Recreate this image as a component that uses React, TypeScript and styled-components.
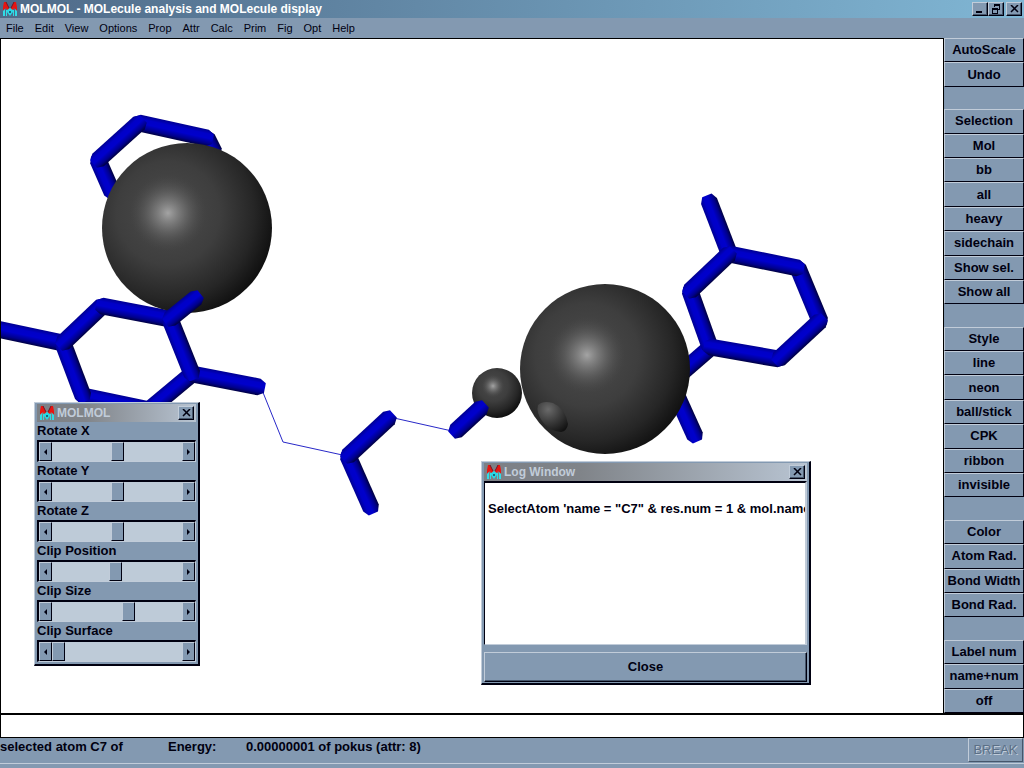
import React, { useState } from "react";
import styled, { createGlobalStyle, css } from "styled-components";

const color = {
  face: "#8399b1",
  light: "#c1ccd9",
  dark: "#46566b",
  ink: "#000010",
};

const GlobalStyle = createGlobalStyle`
  *, *::before, *::after { box-sizing: border-box; }
  body { margin: 0; background: ${color.face}; }
  button, input, textarea { font: inherit; color: inherit; margin: 0; }
`;

const raised = css`
  border: 1px solid;
  border-color: ${color.light} ${color.ink} ${color.ink} ${color.light};
  background: ${color.face};
`;

const Page = styled.div`
  display: flex;
  flex-direction: column;
  height: 100vh;
  overflow: hidden;
  background: ${color.face};
  color: ${color.ink};
  font: bold 13px/16px "Liberation Sans", Arial, sans-serif;
`;

const TitleBar = styled.header<{ $inactive?: boolean }>`
  display: flex;
  align-items: center;
  flex: none;
  height: 18px;
  padding: 0 2px;
  gap: 2px;
  font-size: 12px;
  color: ${(p) => (p.$inactive ? color.light : "#fff")};
  background: ${(p) =>
    p.$inactive
      ? "linear-gradient(90deg, #7c8086, #808489 30%, #b8c4d2)"
      : "linear-gradient(90deg, #4f6a88, #80b6d4)"};
`;

const Title = styled.h1`
  flex: 1;
  margin: 0;
  font-size: 12px;
  line-height: 16px;
  white-space: nowrap;
`;

const CaptionButton = styled.button<{ $apart?: boolean }>`
  ${raised}
  display: grid;
  place-items: center;
  width: 16px;
  height: 14px;
  padding: 0;
  margin-left: ${(p) => (p.$apart ? "2px" : "0")};
  color: ${color.ink};
  box-shadow: inset -1px -1px ${color.dark};
`;

const CaptionButtons = styled.div`
  display: flex;
`;

const MenuBar = styled.nav`
  display: flex;
  flex: none;
  align-items: center;
  height: 20px;
  padding: 0 6px;
  gap: 11px;
  font-size: 11px;
  font-weight: normal;
`;

const MenuItem = styled.button`
  border: 0;
  padding: 0;
  background: none;
`;

const Workspace = styled.div`
  display: flex;
  flex: 1;
  min-height: 0;
`;

const Canvas = styled.main`
  position: relative;
  display: flex;
  flex: 1;
  min-width: 0;
  overflow: hidden;
  background: #fff;
  border: solid #000;
  border-width: 1px 1px 0 1px;
`;

const Scene = styled.svg`
  display: block;
  width: 100%;
`;

const Sidebar = styled.aside`
  display: flex;
  flex-direction: column;
  flex: none;
  width: 80px;
`;

const SideButton = styled.button`
  ${raised}
  flex: 1 1 0;
  min-height: 0;
  padding: 0;
  white-space: nowrap;
`;

const SideGap = styled.div`
  flex: 1 1 0;
`;

const CommandLine = styled.input`
  flex: none;
  width: 100%;
  height: 25px;
  padding: 0 4px;
  border: solid #000;
  border-width: 2px 1px 1px 1px;
  border-radius: 0;
  background: #fff;
  outline: none;
`;

const StatusBar = styled.footer`
  display: flex;
  flex: none;
  align-items: flex-start;
  height: 30px;
  padding-right: 1px;
  line-height: 18px;
  background: linear-gradient(${color.light}, ${color.light}) 0 25px / 100% 1px no-repeat;
`;

const StatusText = styled.span<{ $width?: number }>`
  flex: ${(p) => (p.$width ? `0 0 ${p.$width}px` : "1")};
  white-space: nowrap;
`;

const BreakButton = styled.button`
  ${raised}
  border-color: ${color.light} ${color.dark} ${color.dark} ${color.light};
  width: 55px;
  height: 24px;
  padding: 0;
  font-size: 13px;
  font-weight: normal;
  color: #5b6f86;
  text-shadow: 1px 1px ${color.light};
`;

const Window = styled.section<{ $left: number; $top: number; $width: number }>`
  position: absolute;
  left: ${(p) => p.$left}px;
  top: ${(p) => p.$top}px;
  width: ${(p) => p.$width}px;
  padding: 1px 2px;
  ${raised}
  border-width: 1px 2px 2px 1px;
`;

const SliderGroup = styled.div`
  padding-bottom: 1px;
`;

const SliderLabel = styled.label`
  display: block;
  line-height: 18px;
`;

const SliderRow = styled.div`
  display: flex;
  width: 159px;
  height: 22px;
  border: solid;
  border-width: 2px 1px 1px 2px;
  border-color: ${color.ink} ${color.light} ${color.light} ${color.ink};
`;

const ArrowButton = styled.button`
  ${raised}
  display: grid;
  place-items: center;
  flex: none;
  width: 13px;
  padding: 0;
`;

const Range = styled.input`
  appearance: none;
  flex: 1;
  min-width: 0;
  height: 100%;
  background: #becbd8;
  outline: none;
  &::-webkit-slider-thumb {
    appearance: none;
    width: 13px;
    height: 19px;
    border: 1px solid;
    border-color: ${color.light} ${color.ink} ${color.ink} ${color.light};
    background: ${color.face};
  }
`;

const LogText = styled.textarea`
  display: block;
  width: 100%;
  height: 164px;
  padding: 2px 3px 0;
  border: solid;
  border-width: 2px 2px 1px 1px;
  border-color: ${color.ink} ${color.light} ${color.light} ${color.ink};
  border-radius: 0;
  background: #fff;
  outline: none;
  resize: none;
  overflow: hidden;
  white-space: pre;
`;

const CloseButton = styled.button`
  ${raised}
  display: block;
  width: 100%;
  height: 30px;
  margin-top: 7px;
  box-shadow: inset -1px -1px ${color.dark};
`;

const Logo = () => (
  <svg width="16" height="16" viewBox="0 0 16 16" aria-hidden="true">
    <path d="M2 1h2l3 6v2H5L4 7 1 10V6zM14 1h-2l-3 6v2h2l1-2 3 3V6z" fill="#e81410" />
    <path d="M4 1l3 6M12 1l-3 6" stroke="#701828" />
    <path d="M1 10l2-2v7H1zM15 10l-2-2v7h2zM4 9h1v6H4zM11 9h1v6h-1z" fill="#30dce6" />
    <path d="M5 9l3-2 3 2v2l-3 4-3-4z" fill="#28d8e4" />
    <path d="M7 10h2v2H7z" fill="#186880" />
  </svg>
);

const CloseGlyph = () => (
  <svg width="9" height="8" viewBox="0 0 9 8" aria-hidden="true">
    <path d="M1 0l7 7M8 0l-7 7" stroke="currentColor" strokeWidth="1.5" />
  </svg>
);

const Arrow = ({ right }: { right?: boolean }) => (
  <svg width="5" height="6" viewBox="0 0 5 6" aria-hidden="true">
    <path d={right ? "M1 0l3 3-3 3z" : "M4 0L1 3l3 3z"} fill="currentColor" />
  </svg>
);

type BondLine = [number, number, number, number];

// A shaded stick, lit from the upper left, with tapered ends.
function Bond({ line, id }: { line: BondLine; id: string }) {
  const [x1, y1, x2, y2] = line;
  const len = Math.hypot(x2 - x1, y2 - y1);
  const ux = (x2 - x1) / len;
  const uy = (y2 - y1) / len;
  let nx = -uy;
  let ny = ux;
  if (nx * 0.6 + ny * 0.8 < 0) {
    nx = -nx;
    ny = -ny;
  }
  const at = (x: number, y: number, along: number, across: number) =>
    `${x + ux * along + nx * across},${y + uy * along + ny * across}`;
  const points = [
    at(x1, y1, 0, -8.5),
    at(x1, y1, -6, -5),
    at(x1, y1, -6, 5),
    at(x1, y1, 0, 8.5),
    at(x2, y2, 0, 8.5),
    at(x2, y2, 6, 5),
    at(x2, y2, 6, -5),
    at(x2, y2, 0, -8.5),
  ].join(" ");
  return (
    <>
      <linearGradient
        id={id}
        gradientUnits="userSpaceOnUse"
        x1={x1 - nx * 8.5}
        y1={y1 - ny * 8.5}
        x2={x1 + nx * 8.5}
        y2={y1 + ny * 8.5}
      >
        <stop offset="0" stopColor="#000090" />
        <stop offset="0.25" stopColor="#0000c8" />
        <stop offset="0.5" stopColor="#0000cc" />
        <stop offset="0.8" stopColor="#00008c" />
        <stop offset="1" stopColor="#000040" />
      </linearGradient>
      <polygon points={points} fill={`url(#${id})`} />
    </>
  );
}

function Sphere({ cx, cy, r, hx, hy, id }: Record<"cx" | "cy" | "r" | "hx" | "hy", number> & { id: string }) {
  return (
    <>
      <radialGradient id={`${id}-body`} gradientUnits="userSpaceOnUse" cx={hx} cy={hy} r={r * 1.35}>
        <stop offset="0" stopColor="#4c4c4c" />
        <stop offset="0.45" stopColor="#3e3e3e" />
        <stop offset="0.75" stopColor="#262626" />
        <stop offset="1" stopColor="#0a0a0a" />
      </radialGradient>
      <radialGradient id={`${id}-shine`} gradientUnits="userSpaceOnUse" cx={hx} cy={hy} r={r * 0.45}>
        <stop offset="0" stopColor="#a4a4a4" />
        <stop offset="0.4" stopColor="#848484" stopOpacity="0.6" />
        <stop offset="1" stopColor="#4c4c4c" stopOpacity="0" />
      </radialGradient>
      <circle cx={cx} cy={cy} r={r} fill={`url(#${id}-body)`} />
      <circle cx={cx} cy={cy} r={r} fill={`url(#${id}-shine)`} />
    </>
  );
}

const backBonds: BondLine[] = [
  [112, 192, 98, 160],
  [207, 138, 214, 152],
  [139, 123, 207, 138],
  [98, 160, 139, 123],
  [-8, 328, 63, 343],
  [83, 396, 150, 410],
  [63, 343, 83, 396],
  [63, 343, 102, 306],
  [102, 306, 170, 319],
  [192, 374, 150, 409],
  [192, 374, 259, 387],
  [348, 456, 371, 508],
  [348, 456, 389, 418],
  [672, 385, 695, 436],
  [680, 374, 710, 348],
  [709, 201, 729, 253],
  [798, 268, 820, 321],
  [729, 254, 798, 268],
  [690, 291, 710, 347],
  [690, 291, 729, 254],
  [710, 347, 779, 359],
  [779, 359, 820, 321],
];

const frontBonds: BondLine[] = [
  [170, 319, 192, 374],
  [170, 319, 196, 298],
  [456, 431, 481, 408],
];

const Molecule = () => (
  <Scene viewBox="1 39 942 674" preserveAspectRatio="xMinYMin slice" role="img" aria-label="Molecule">
    <path d="M262 390l21 52 64 14M394 418l58 13" fill="none" stroke="#2828c8" />
    {backBonds.map((b, i) => (
      <Bond key={i} line={b} id={`back-${i}`} />
    ))}
    <Sphere id="s1" cx={187} cy={228} r={85} hx={168} hy={213} />
    <Sphere id="s2" cx={605} cy={369} r={85} hx={587} hy={355} />
    <Sphere id="s3" cx={497} cy={393} r={25} hx={493} hy={386} />
    <radialGradient id="bump" cx="0.35" cy="0.25" r="0.85">
      <stop offset="0" stopColor="#6a6a6a" />
      <stop offset="0.5" stopColor="#3c3c3c" />
      <stop offset="1" stopColor="#121212" />
    </radialGradient>
    <path d="M538 405q5-5 15-2 12 5 15 21-1 7-7 8-12-1-19-11-6-9-4-16z" fill="url(#bump)" />
    {frontBonds.map((b, i) => (
      <Bond key={i} line={b} id={`front-${i}`} />
    ))}
  </Scene>
);

const menus = ["File", "Edit", "View", "Options", "Prop", "Attr", "Calc", "Prim", "Fig", "Opt", "Help"];

const sideGroups = [
  ["AutoScale", "Undo"],
  ["Selection", "Mol", "bb", "all", "heavy", "sidechain", "Show sel.", "Show all"],
  ["Style", "line", "neon", "ball/stick", "CPK", "ribbon", "invisible"],
  ["Color", "Atom Rad.", "Bond Width", "Bond Rad."],
  ["Label num", "name+num", "off"],
];

const sliders = [
  { name: "Rotate X", start: 50 },
  { name: "Rotate Y", start: 50 },
  { name: "Rotate Z", start: 50 },
  { name: "Clip Position", start: 49 },
  { name: "Clip Size", start: 60 },
  { name: "Clip Surface", start: 0 },
];

function Slider({ name, start }: { name: string; start: number }) {
  const [value, setValue] = useState(start);
  const id = name.toLowerCase().replace(" ", "-");
  const step = (by: number) => setValue((v) => Math.max(0, Math.min(100, v + by)));
  return (
    <>
      <SliderLabel htmlFor={id}>{name}</SliderLabel>
      <SliderRow>
        <ArrowButton aria-label={`Decrease ${name}`} onClick={() => step(-1)}>
          <Arrow />
        </ArrowButton>
        <Range id={id} type="range" min={0} max={100} value={value} onChange={(e) => setValue(+e.target.value)} />
        <ArrowButton aria-label={`Increase ${name}`} onClick={() => step(1)}>
          <Arrow right />
        </ArrowButton>
      </SliderRow>
    </>
  );
}

export default function App() {
  return (
    <Page>
      <GlobalStyle />
      <TitleBar>
        <Logo />
        <Title>MOLMOL - MOLecule analysis and MOLecule display</Title>
        <CaptionButtons>
          <CaptionButton aria-label="Minimize">
            <svg width="10" height="8" viewBox="0 0 10 8">
              <path d="M1 6h6v2H1z" fill="currentColor" />
            </svg>
          </CaptionButton>
          <CaptionButton aria-label="Restore">
            <svg width="10" height="10" viewBox="0 0 10 10" shapeRendering="crispEdges">
              <path
                d="M3 0h6v6H7V5h1V2H4v1H3zM1 4h6v6H1zM2 6v3h4V6z"
                fillRule="evenodd"
                fill="currentColor"
              />
            </svg>
          </CaptionButton>
          <CaptionButton aria-label="Close" $apart>
            <CloseGlyph />
          </CaptionButton>
        </CaptionButtons>
      </TitleBar>
      <MenuBar>
        {menus.map((m) => (
          <MenuItem key={m}>{m}</MenuItem>
        ))}
      </MenuBar>
      <Workspace>
        <Canvas>
          <Molecule />
          <Window $left={33} $top={363} $width={166}>
            <TitleBar $inactive>
              <Logo />
              <Title as="h2">MOLMOL</Title>
              <CaptionButton aria-label="Close MOLMOL">
                <CloseGlyph />
              </CaptionButton>
            </TitleBar>
            <SliderGroup>
              {sliders.map((s) => (
                <Slider key={s.name} {...s} />
              ))}
            </SliderGroup>
          </Window>
          <Window $left={480} $top={422} $width={330}>
            <TitleBar $inactive>
              <Logo />
              <Title as="h2">Log Window</Title>
              <CaptionButton aria-label="Close Log Window">
                <CloseGlyph />
              </CaptionButton>
            </TitleBar>
            <LogText
              aria-label="Log"
              readOnly
              wrap="off"
              value={"\nSelectAtom 'name = \"C7\" & res.num = 1 & mol.name"}
            />
            <CloseButton>Close</CloseButton>
          </Window>
        </Canvas>
        <Sidebar>
          {sideGroups.map((group, i) => (
            <React.Fragment key={i}>
              {i > 0 && <SideGap />}
              {group.map((label) => (
                <SideButton key={label}>{label}</SideButton>
              ))}
            </React.Fragment>
          ))}
        </Sidebar>
      </Workspace>
      <CommandLine aria-label="Command" />
      <StatusBar>
        <StatusText $width={168}>selected atom C7 of</StatusText>
        <StatusText $width={78}>Energy:</StatusText>
        <StatusText>0.00000001 of pokus (attr: 8)</StatusText>
        <BreakButton disabled>BREAK</BreakButton>
      </StatusBar>
    </Page>
  );
}
